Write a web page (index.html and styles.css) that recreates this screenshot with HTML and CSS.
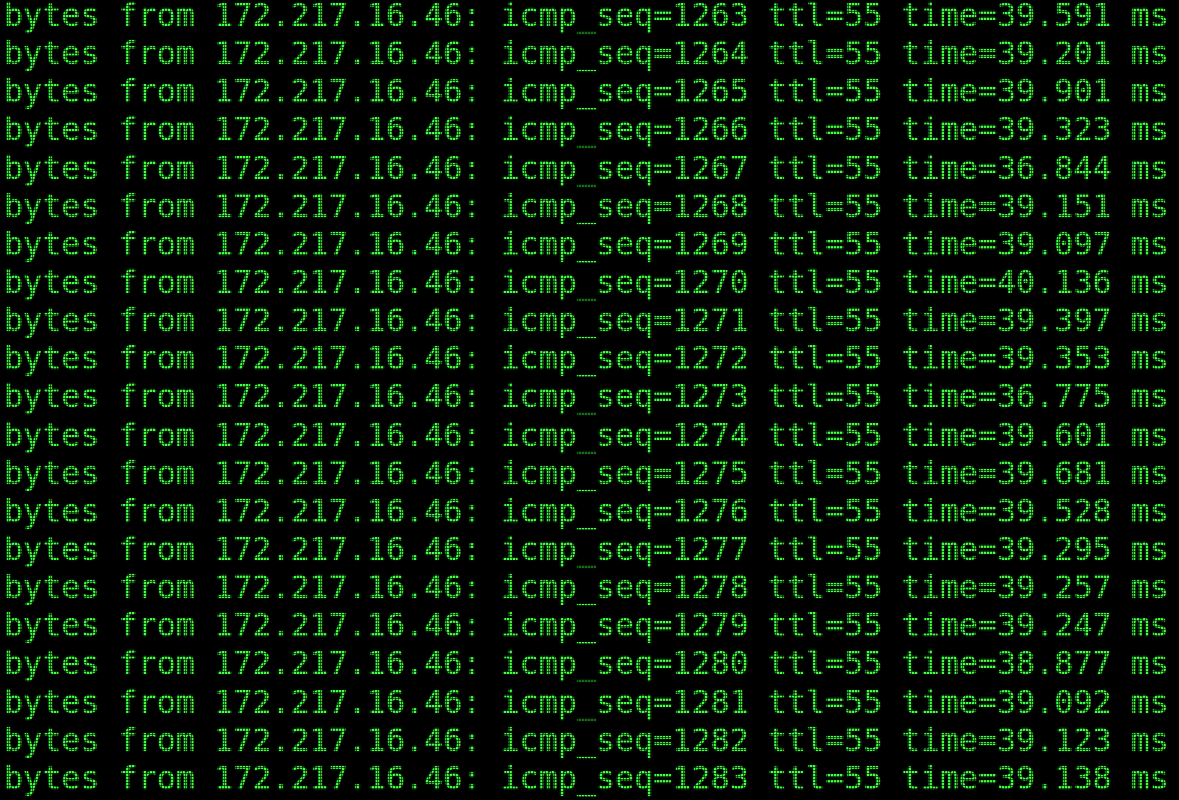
FILE: index.html
```html
<!DOCTYPE html>
<html>
<head>
<meta charset="utf-8">
<title>ping</title>
<link rel="stylesheet" href="styles.css">
</head>
<body>
<div class="screen">
<div class="output">
<div class="line">bytes from 172.217.16.46: icmp_seq=1263 ttl=55 time=39.591 ms</div>
<div class="line">bytes from 172.217.16.46: icmp_seq=1264 ttl=55 time=39.201 ms</div>
<div class="line">bytes from 172.217.16.46: icmp_seq=1265 ttl=55 time=39.901 ms</div>
<div class="line">bytes from 172.217.16.46: icmp_seq=1266 ttl=55 time=39.323 ms</div>
<div class="line">bytes from 172.217.16.46: icmp_seq=1267 ttl=55 time=36.844 ms</div>
<div class="line">bytes from 172.217.16.46: icmp_seq=1268 ttl=55 time=39.151 ms</div>
<div class="line">bytes from 172.217.16.46: icmp_seq=1269 ttl=55 time=39.097 ms</div>
<div class="line">bytes from 172.217.16.46: icmp_seq=1270 ttl=55 time=40.136 ms</div>
<div class="line">bytes from 172.217.16.46: icmp_seq=1271 ttl=55 time=39.397 ms</div>
<div class="line">bytes from 172.217.16.46: icmp_seq=1272 ttl=55 time=39.353 ms</div>
<div class="line">bytes from 172.217.16.46: icmp_seq=1273 ttl=55 time=36.775 ms</div>
<div class="line">bytes from 172.217.16.46: icmp_seq=1274 ttl=55 time=39.601 ms</div>
<div class="line">bytes from 172.217.16.46: icmp_seq=1275 ttl=55 time=39.681 ms</div>
<div class="line">bytes from 172.217.16.46: icmp_seq=1276 ttl=55 time=39.528 ms</div>
<div class="line">bytes from 172.217.16.46: icmp_seq=1277 ttl=55 time=39.295 ms</div>
<div class="line">bytes from 172.217.16.46: icmp_seq=1278 ttl=55 time=39.257 ms</div>
<div class="line">bytes from 172.217.16.46: icmp_seq=1279 ttl=55 time=39.247 ms</div>
<div class="line">bytes from 172.217.16.46: icmp_seq=1280 ttl=55 time=38.877 ms</div>
<div class="line">bytes from 172.217.16.46: icmp_seq=1281 ttl=55 time=39.092 ms</div>
<div class="line">bytes from 172.217.16.46: icmp_seq=1282 ttl=55 time=39.123 ms</div>
<div class="line">bytes from 172.217.16.46: icmp_seq=1283 ttl=55 time=39.138 ms</div>
</div>
</div>
</body>
</html>
```
FILE: styles.css
```css
html, body {
  margin: 0;
  padding: 0;
  background: #000;
  overflow: hidden;
}

.screen {
  position: relative;
  width: 1179px;
  height: 800px;
  overflow: hidden;
  background: #000;
}

.output {
  padding-left: 4px;
  font-family: "DejaVu Sans Mono", "Liberation Mono", monospace;
  font-size: 31.73px;
  color: #44ff44;
  text-shadow: 0 0 2px rgba(60, 255, 60, 0.5);
}

.line {
  height: 38.15px;
  line-height: 30px;
  white-space: pre;
}

.screen::after {
  content: "";
  position: absolute;
  inset: 0;
  pointer-events: none;
  background:
    repeating-linear-gradient(90deg, transparent 0 2px, rgba(0, 0, 0, 0.6) 2px 3px),
    repeating-linear-gradient(0deg, transparent 0 2px, rgba(0, 0, 0, 0.6) 2px 3px);
}
```
